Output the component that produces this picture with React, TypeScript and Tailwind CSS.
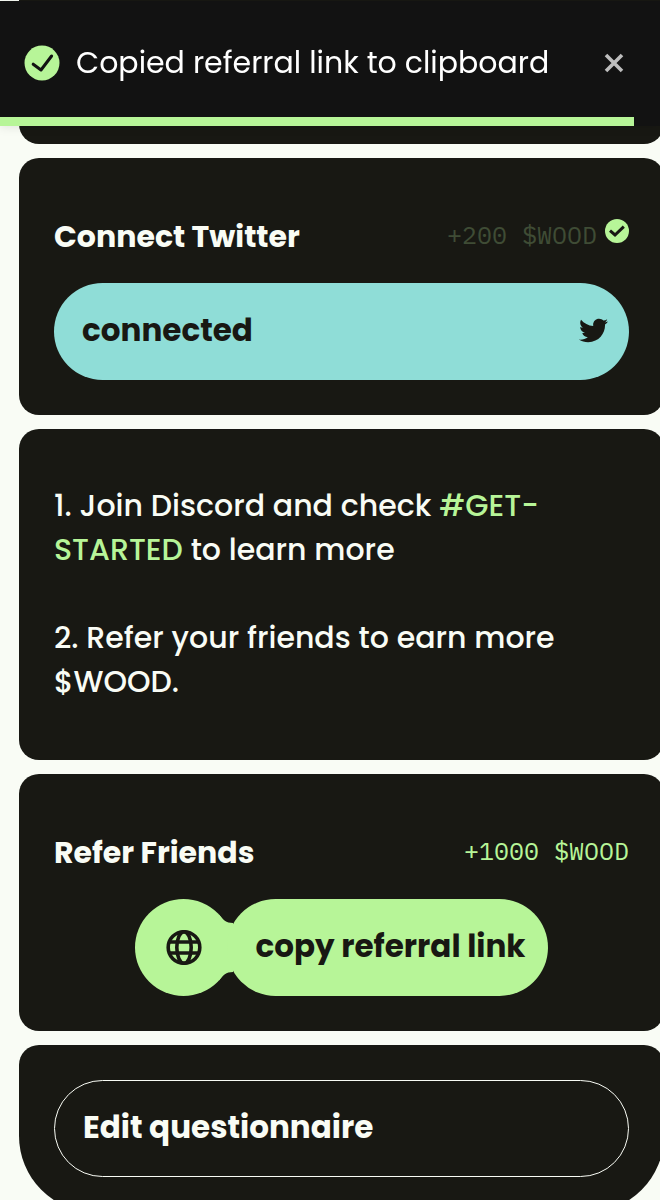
import { useState } from "react";
import type { ReactNode } from "react";
import { FaTwitter } from "react-icons/fa";
import clsx from "clsx";

const TOAST_PROGRESS = 96;

function Card({ className, children }: { className?: string; children?: ReactNode }) {
  return (
    <section className={clsx("bg-[#181813] px-[35px]", className)}>
      {children}
    </section>
  );
}

function TaskHeader({ title, reward, done }: { title: string; reward: string; done?: boolean }) {
  return (
    <div className="mb-6 flex items-center justify-between">
      <h2 className="text-[30px] font-bold leading-[44px]">{title}</h2>
      <div className="flex gap-2 pb-1">
        <span
          className={clsx(
            "font-['IBM_Plex_Mono','Liberation_Mono',monospace] text-[25px] leading-8",
            done ? "text-[#3f4c35]" : "text-[#b7f598]"
          )}
        >
          {reward}
        </span>
        {done && <CheckBadge />}
      </div>
    </div>
  );
}

function CheckBadge() {
  return (
    <svg viewBox="0 0 24 24" className="size-6" aria-hidden="true">
      <circle cx="12" cy="12" r="12" fill="#b7f598" />
      <path
        d="M5 11.6 10 16 18.8 7.6"
        fill="none"
        stroke="#181813"
        strokeWidth="3"
      />
    </svg>
  );
}

function ToastCheck() {
  return (
    <svg viewBox="0 0 36 36" className="size-9 shrink-0" aria-hidden="true">
      <circle cx="18" cy="18" r="17.5" fill="#b7f598" />
      <path
        d="M9.2 19.2 17 25 27.6 11"
        fill="none"
        stroke="#121212"
        strokeWidth="3"
        strokeLinecap="round"
        strokeLinejoin="round"
      />
    </svg>
  );
}

// round end of the referral button, with the neck that joins it to the pill
function GlobeBubble() {
  return (
    <svg viewBox="0 0 98 97" className="h-[97px] w-[98px] shrink-0" aria-hidden="true">
      <circle cx="48.5" cy="48.5" r="48.5" fill="#b7f598" />
      <path
        d="M84 15.5C88 21 91 24 98 24V73C91 73 88 76 84 81.5Z"
        fill="#b7f598"
      />
      <g fill="none" stroke="#181813" strokeWidth="3.6">
        <circle cx="49" cy="48.5" r="15.8" />
        <ellipse cx="49" cy="48.5" rx="7.2" ry="15.8" />
        <path d="M34 43H64M34 54H64" />
      </g>
    </svg>
  );
}

function Toast({ onClose }: { onClose: () => void }) {
  return (
    <div
      role="status"
      className="fixed inset-x-0 top-px z-10 bg-[#121212] shadow-[0_1px_10px_rgba(0,0,0,0.1)]"
    >
      <div className="flex h-[116px] items-center pl-6 pr-9 pt-2">
        <ToastCheck />
        <p className="ml-4 flex-1 text-[30px] leading-[44px] text-white">
          Copied referral link to clipboard
        </p>
        <button type="button" aria-label="Close" onClick={onClose} className="cursor-pointer">
          <svg viewBox="0 0 20 20" className="size-5" aria-hidden="true">
            <path d="M2 2 18 18M18 2 2 18" stroke="#bdbdbd" strokeWidth="3.6" />
          </svg>
        </button>
      </div>
      <div className="h-[9px] bg-[#b7f598]" style={{ width: `${TOAST_PROGRESS}%` }} />
    </div>
  );
}

export default function App() {
  const [toastOpen, setToastOpen] = useState(true);

  return (
    <div className="min-h-screen overflow-x-clip bg-[#f9fcf5] font-['Poppins','Inter',sans-serif] text-[#f9fcf5]">
      {toastOpen && <Toast onClose={() => setToastOpen(false)} />}

      <main className="-mr-1 ml-[19px] flex flex-col gap-3.5">
        <Card className="h-36 rounded-b-[20px]" />

        <Card className="rounded-[20px] pb-[35px] pt-[57px]">
          <TaskHeader title="Connect Twitter" reward="+200 $WOOD" done />
          <button
            type="button"
            className="flex h-[97px] w-full items-center justify-between rounded-full bg-[#8fddd7] pb-0.5 pl-7 pr-[21px] text-[31px] font-bold text-[#181813]"
          >
            connected
            <FaTwitter className="size-[29px]" />
          </button>
        </Card>

        <Card className="rounded-[20px] pb-14 pt-[55px] text-[30px] font-medium leading-[44px]">
          <p className="mb-11">
            1. Join Discord and check{" "}
            <a href="#get-started" className="text-[#b7f598]">
              #GET-STARTED
            </a>{" "}
            to learn more
          </p>
          <p>2. Refer your friends to earn more $WOOD.</p>
        </Card>

        <Card className="rounded-[20px] pb-[35px] pt-[57px]">
          <TaskHeader title="Refer Friends" reward="+1000 $WOOD" />
          <button
            type="button"
            onClick={() => setToastOpen(true)}
            className="mx-auto flex cursor-pointer items-center text-[31px] font-bold text-[#181813]"
          >
            <GlobeBubble />
            <span className="-ml-1.5 flex h-[97px] w-[321px] items-center justify-center rounded-full bg-[#b7f598] pb-0.5 pl-1.5">
              copy referral link
            </span>
          </button>
        </Card>

        <Card className="rounded-b-[76px] rounded-t-[20px] py-[35px]">
          <button
            type="button"
            className="flex h-[97px] w-full cursor-pointer items-center rounded-full border border-[#f9fcf5] px-7 pb-0.5 text-[31px] font-bold"
          >
            Edit questionnaire
          </button>
        </Card>
      </main>
    </div>
  );
}
